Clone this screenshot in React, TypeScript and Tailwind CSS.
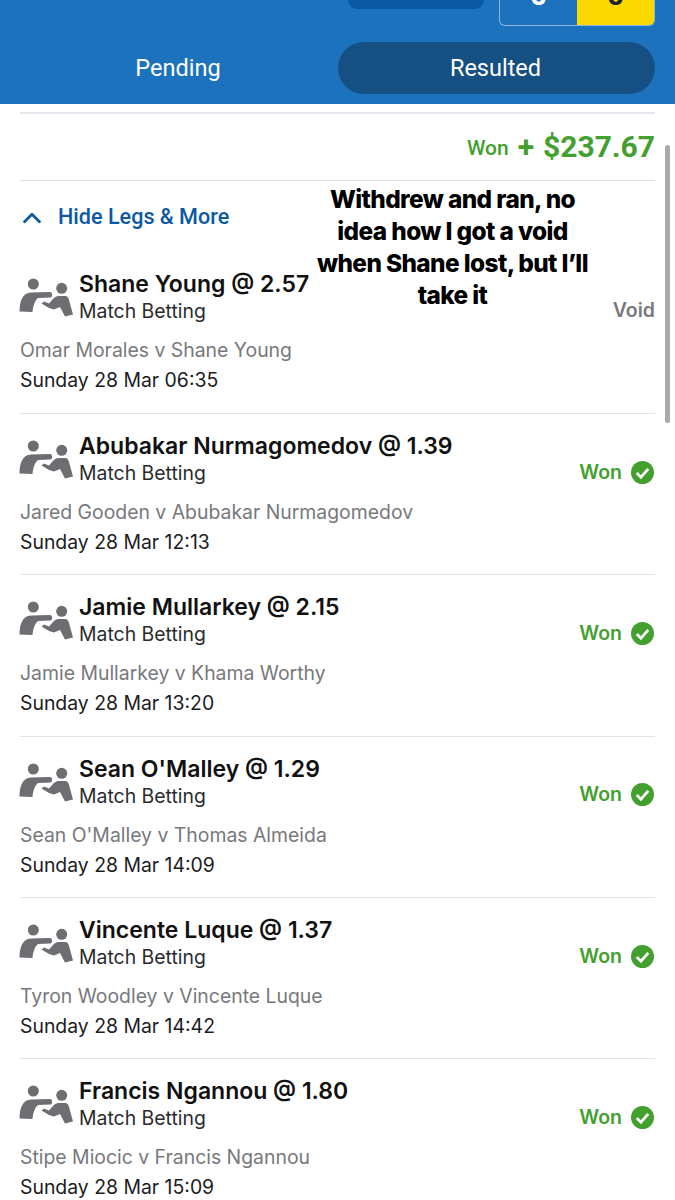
import { ChevronUp } from "lucide-react"

const legs = [
  { title: "Shane Young @ 2.57", match: "Omar Morales v Shane Young", date: "Sunday 28 Mar 06:35", status: "Void" },
  { title: "Abubakar Nurmagomedov @ 1.39", match: "Jared Gooden v Abubakar Nurmagomedov", date: "Sunday 28 Mar 12:13", status: "Won" },
  { title: "Jamie Mullarkey @ 2.15", match: "Jamie Mullarkey v Khama Worthy", date: "Sunday 28 Mar 13:20", status: "Won" },
  { title: "Sean O'Malley @ 1.29", match: "Sean O'Malley v Thomas Almeida", date: "Sunday 28 Mar 14:09", status: "Won" },
  { title: "Vincente Luque @ 1.37", match: "Tyron Woodley v Vincente Luque", date: "Sunday 28 Mar 14:42", status: "Won" },
  { title: "Francis Ngannou @ 1.80", match: "Stipe Miocic v Francis Ngannou", date: "Sunday 28 Mar 15:09", status: "Won" },
]

function FightIcon() {
  return (
    <svg width="54" height="40" viewBox="0 0 54 40" fill="#6d6e72" className="shrink-0">
      <circle cx="14.3" cy="6" r="5.5" />
      <circle cx="42.7" cy="10.3" r="5.5" />
      <path d="M0.5 33.5 C0.5 24 3 15 12 14.5 L31 14 C33.5 14 34 19 31.5 19.5 L19 20 C16 22 14 28 13.5 34 Z" />
      <path d="M22.5 25.5 L25 23.5 L30 25.5 L34 21 C36 18.5 38 18 42 18 L46 18 C48.5 18 49.5 20 50 22 L54 36.5 L46 38.5 L41 29 L35 31.5 L30 30 Z" />
    </svg>
  )
}

function WonBadge() {
  return (
    <div className="flex items-center gap-[9px] pr-[1px]">
      <span className="text-[19.5px] font-semibold text-[#43a02f]">Won</span>
      <svg width="23" height="23" viewBox="0 0 22 22">
        <circle cx="11" cy="11" r="11" fill="#43a02f" />
        <path d="M5.5 11.5 L9.5 15.5 L16.5 7.5" fill="none" stroke="#fff" strokeWidth="2.6" />
      </svg>
    </div>
  )
}

export default function App() {
  return (
    <div className="relative h-[1200px] w-[675px] overflow-hidden bg-white font-['Inter',sans-serif]">
      <div className="h-[104px] overflow-hidden bg-[#1d72be] px-5 font-['Roboto',sans-serif]">
        <div className="flex h-[26px] justify-end gap-[15px]">
          <div className="h-[9px] w-[136px] rounded-b-[18px] bg-[#0b58a4]" />
          <div className="flex h-[26px] w-[156px] overflow-hidden rounded-b-[6px] border border-t-0 border-[#8fb8de]">
            <div className="flex flex-1 items-end justify-center pb-[15px] text-[30px] font-bold leading-none text-white">0</div>
            <div className="flex w-[77px] items-end justify-center bg-[#fdd800] pb-[15px] text-[30px] font-bold leading-none text-[#222]">0</div>
          </div>
        </div>
        <div className="mt-4 grid grid-cols-[318px_1fr]">
          <div className="flex h-[52px] items-center justify-center pr-[2px] pt-[1px] text-[23.5px] text-white">Pending</div>
          <div className="flex h-[52px] items-center justify-center rounded-full bg-[#164f82] pr-[2px] pt-[1px] text-[23.5px] text-white">Resulted</div>
        </div>
      </div>

      <div className="px-5 pt-[8px]">
        <div className="h-[2px] bg-[#e6e7ef]" />
        <div className="flex h-[66px] items-center justify-end gap-[9px] font-['Roboto',sans-serif] font-bold text-[#43a02f]">
          <span className="mt-1 text-[21px] font-medium">Won</span>
          <span className="text-[30px] leading-none">+</span>
          <span className="text-[30px] leading-none">$237.67</span>
        </div>
        <div className="h-[1px] bg-[#dfe0e6]" />
        <div className="flex h-[73px] items-center gap-[12px] font-['Roboto',sans-serif] text-[#0b58a4]">
          <ChevronUp size={30} strokeWidth={2.2} className="-ml-[3px] -mr-[1px]" />
          <span className="text-[21.6px] font-medium">Hide Legs &amp; More</span>
        </div>

        {legs.map((leg, i) => (
          <div key={leg.title} className={i === 0 ? "h-[160px] border-b border-[#e4e4e6] pt-[15px]" : "h-[161.25px] border-b border-[#e4e4e6] pt-[17px]"}>
            <div className="flex items-start">
              <div className="-ml-[1px] pt-[9px]">
                <FightIcon />
              </div>
              <div className="ml-[6px] flex-1">
                <div className="text-[23px] font-semibold leading-[30px] text-[#111]">{leg.title}</div>
                <div className="text-[19.4px] leading-[24px] text-[#2a2a2c]">Match Betting</div>
              </div>
              <div className="-mb-[2px] self-end">
                {leg.status === "Won" ? (
                  <WonBadge />
                ) : (
                  <span className="text-[19.5px] font-semibold text-[#77787c]">Void</span>
                )}
              </div>
            </div>
            <div className="mt-[15px] text-[19.4px] leading-[24px] text-[#77787c]">{leg.match}</div>
            <div className="mt-[6px] text-[19.4px] leading-[24px] text-[#1c1c1e]">{leg.date}</div>
          </div>
        ))}
      </div>

      <div className="absolute left-[665px] top-[145px] h-[278px] w-[5px] rounded-full bg-[#a9a9a9]" />

      <div className="absolute left-[310px] top-[183px] w-[285px] text-center text-[24.4px] font-extrabold leading-[32px] tracking-tight text-black">
        Withdrew and ran, no idea how I got a void when Shane lost, but I’ll take it
      </div>
    </div>
  )
}
